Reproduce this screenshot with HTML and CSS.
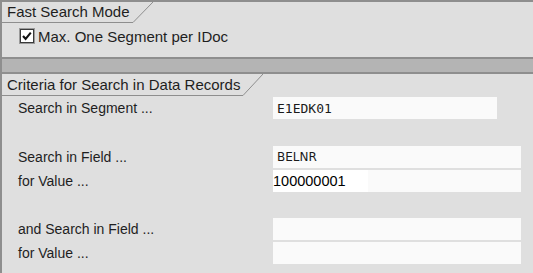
FILE: index.html
```html
<!DOCTYPE html>
<html>
<head>
<meta charset="utf-8">
<link rel="stylesheet" href="styles.css">
</head>
<body>
<div class="page">
  <section class="group group-fast">
    <div class="tab">
      <div class="tab-label tab-label-fast">Fast Search Mode</div>
      <svg class="tab-slant" width="20" height="21" viewBox="0 0 20 21"><line x1="0" y1="20.5" x2="20" y2="0" stroke="#8e8e8e" stroke-width="1"/></svg>
    </div>
    <div class="group-body">
      <label class="check-row">
        <span class="checkbox">
          <svg width="16" height="16" viewBox="0 0 16 16">
            <rect x="0.5" y="0.5" width="15" height="15" fill="#f4f4f4" stroke="#9a9a9a"/>
            <rect x="1.5" y="1.5" width="13" height="13" fill="#ffffff" stroke="#3a3a3a"/>
            <path d="M4 8 L6.6 10.8 L11.8 4.6" fill="none" stroke="#111" stroke-width="2.1"/>
          </svg>
        </span>
        <span class="check-text">Max. One Segment per IDoc</span>
      </label>
    </div>
  </section>
  <div class="band"></div>
  <section class="group group-criteria">
    <div class="tab">
      <div class="tab-label tab-label-criteria">Criteria for Search in Data Records</div>
      <svg class="tab-slant" width="20" height="22" viewBox="0 0 20 22"><line x1="0" y1="21.5" x2="20" y2="0" stroke="#8e8e8e" stroke-width="1"/></svg>
    </div>
    <div class="fields">
      <div class="field-group">
        <div class="row">
          <span class="label">Search in Segment ...</span>
          <div class="input input-short input-mono">E1EDK01</div>
        </div>
      </div>
      <div class="field-group field-group-2">
        <div class="row">
          <span class="label">Search in Field ...</span>
          <div class="input input-sans">BELNR</div>
        </div>
        <div class="row">
          <span class="label">for Value ...</span>
          <div class="input input-value"><span class="value-hl">100000001</span></div>
        </div>
      </div>
      <div class="field-group field-group-3">
        <div class="row">
          <span class="label">and Search in Field ...</span>
          <div class="input"></div>
        </div>
        <div class="row">
          <span class="label">for Value ...</span>
          <div class="input"></div>
        </div>
      </div>
    </div>
  </section>
</div>
</body>
</html>
```
FILE: styles.css
```css
* { box-sizing: border-box; }
html, body {
  margin: 0;
  padding: 0;
  background: #dfdfdf;
}
body {
  font-family: "Liberation Sans", Arial, sans-serif;
  color: #1e1e1e;
  width: 533px;
  height: 273px;
  overflow: hidden;
}
.page {
  border-left: 2px solid #8e8e8e;
  height: 273px;
  display: flex;
  flex-direction: column;
}
.group-fast {
  border-top: 2px solid #8e8e8e;
  height: 57px;
}
.tab {
  display: flex;
  align-items: flex-start;
}
.tab-label {
  font-size: 15px;
  border-bottom: 1px solid #8e8e8e;
  padding: 0 3px 0 5px;
  white-space: nowrap;
}
.tab-label-fast {
  line-height: 20px;
  width: 131px;
}
.tab-label-criteria {
  line-height: 21px;
  width: 241px;
}
.tab-slant { display: block; flex: none; }
.group-body {
  padding: 5px 0 0 17px;
}
.check-row {
  display: flex;
  align-items: center;
  gap: 3px;
  height: 16px;
}
.checkbox { display: block; width: 16px; height: 16px; }
.checkbox svg { display: block; }
.check-text {
  font-size: 15px;
  line-height: 16px;
  padding-top: 1px;
}
.band {
  height: 17px;
  background: #b4b4b4;
  border-top: 2px solid #8e8e8e;
  border-bottom: 2px solid #8e8e8e;
}
.fields {
  padding: 1px 0 0 16px;
  display: flex;
  flex-direction: column;
}
.field-group {
  display: flex;
  flex-direction: column;
  gap: 2px;
}
.field-group-2 { margin-top: 27px; }
.field-group-3 { margin-top: 26px; }
.row {
  display: grid;
  grid-template-columns: 255px 248px;
  align-items: center;
  height: 22px;
}
.label {
  font-size: 14px;
  line-height: 16px;
}
.input {
  height: 22px;
  background: #fafafa;
  display: flex;
  align-items: center;
}
.input-short { width: 224px; }
.input-mono {
  font-family: "DejaVu Sans Mono", monospace;
  font-size: 13px;
  padding-left: 4px;
  color: #1a1a1a;
}
.input-sans {
  font-family: "DejaVu Sans", sans-serif;
  font-size: 12px;
  padding-left: 4px;
  color: #1a1a1a;
}
.input-value {
  font-family: "Liberation Sans", Arial, sans-serif;
  font-size: 14.5px;
  color: #000;
}
.value-hl {
  display: flex;
  align-items: center;
  width: 95px;
  height: 22px;
  background: #ffffff;
}
```
